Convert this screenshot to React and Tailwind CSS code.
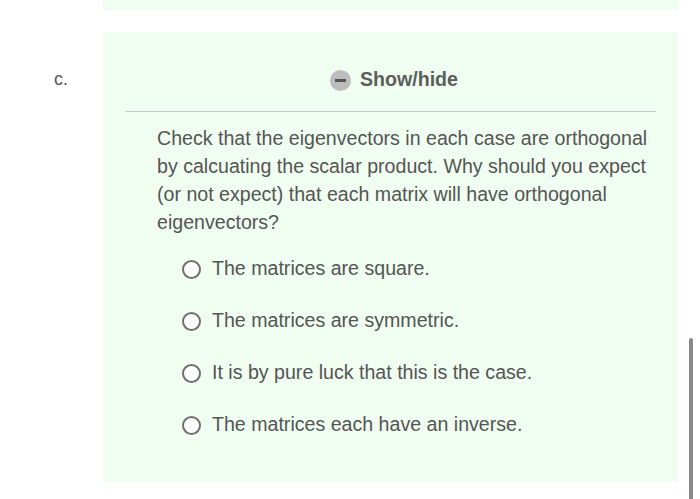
import React from 'react';

const options = [
  'The matrices are square.',
  'The matrices are symmetric.',
  'It is by pure luck that this is the case.',
  'The matrices each have an inverse.',
];

const App = () => {
  return (
    <div className="relative w-[700px] h-[499px] overflow-hidden bg-white font-['Liberation_Sans',Arial,sans-serif] text-[#555]">
      {/* previous part, cut off at the top */}
      <div className="ml-[103px] w-[575px] h-[10px] bg-[#f0fdf1]" />

      <div className="flex mt-[22px]">
        <div className="w-[103px] pl-[54px] pt-[34px] text-[18px]">c.</div>
        <div className="w-[575px] h-[450px] bg-[#f0fdf1] px-[22px]">
          <div className="flex items-center justify-center gap-[9px] pl-[7px] pt-[33px] pb-[17px] border-b border-[#c8cbc8]">
            <span className="flex items-center justify-center w-[21px] h-[21px] rounded-full bg-[#bdbdbd] mt-[2px]">
              <span className="block w-[11px] h-[3px] bg-[#555]" />
            </span>
            <span className="text-[19.6px] font-bold text-[#5b5f5b]">Show/hide</span>
          </div>

          <p className="pl-[32px] pr-[4px] mt-[12px] text-[19.6px] leading-[28px]">
            Check that the eigenvectors in each case are orthogonal by calcuating the scalar product. Why should you expect (or not expect) that each matrix will have orthogonal eigenvectors?
          </p>

          <div className="flex flex-col gap-[30px] mt-[21px] pl-[57px]">
            {options.map((o) => (
              <label key={o} className="flex items-center gap-[11px] text-[19.6px] leading-[22px]">
                <span className="block w-[19px] h-[19px] rounded-full border-[2.5px] border-[#6f6f6f] bg-white mt-[3px]" />
                {o}
              </label>
            ))}
          </div>
        </div>
      </div>

      {/* scrollbar */}
      <div className="absolute left-[689px] top-[338px] w-[4px] h-[170px] rounded-full bg-[#8a8a8a]" />
    </div>
  );
};

export default App;
